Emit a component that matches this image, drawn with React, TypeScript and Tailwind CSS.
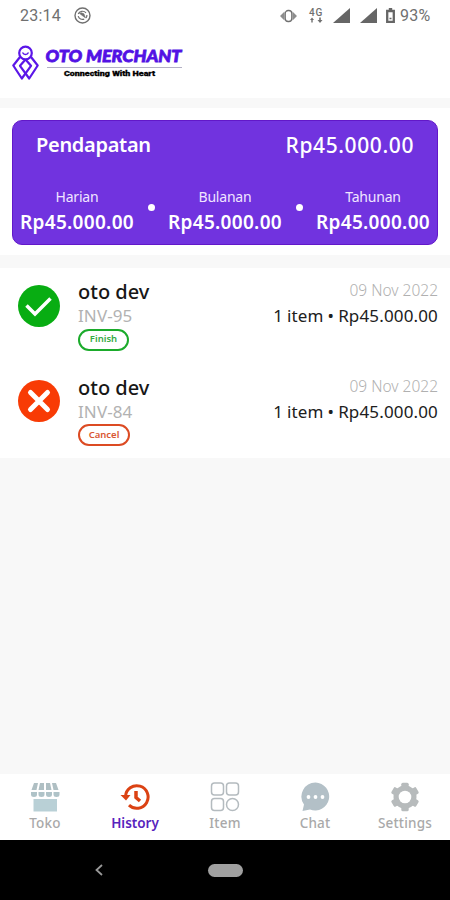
import React from 'react';
import { clsx } from 'clsx';

const stats = [
  { label: 'Harian', value: 'Rp45.000.00' },
  { label: 'Bulanan', value: 'Rp45.000.00' },
  { label: 'Tahunan', value: 'Rp45.000.00' },
];

const orders = [
  { name: 'oto dev', invoice: 'INV-95', status: 'Finish', date: '09 Nov 2022', total: '1 item • Rp45.000.00' },
  { name: 'oto dev', invoice: 'INV-84', status: 'Cancel', date: '09 Nov 2022', total: '1 item • Rp45.000.00' },
];

function StatusBar() {
  return (
    <div className="flex h-[31px] items-center justify-between pl-5 pr-[18px] font-[Roboto,sans-serif] text-[#707070]">
      <div className="flex items-center gap-[13px]">
        <span className="text-[16px] leading-none tracking-[0.2px]">23:14</span>
        <svg width="17" height="17" viewBox="0 0 17 17" fill="none" stroke="currentColor">
          <circle cx="8.5" cy="8.5" r="7.5" strokeWidth="1.4" />
          <path d="M4.2 7C5.4 3.9 9.8 3.3 12 5.8M4.2 9.2c.8 2.7 3.5 3.9 6 2.9M12.9 8c.1 1.200-.3 2.200-.9 3" strokeWidth="1.2" />
          <path d="M5.5 6.5l6 4.5-1.5-4.2-2.5-1z" fill="currentColor" strokeWidth=".5" />
        </svg>
      </div>
      <div className="flex items-center">
        <svg width="17" height="14" viewBox="0 0 17 14" fill="currentColor">
          <path d="M0 7l4.500-4.500v9zM17 7l-4.500-4.500v9z" opacity=".8" />
          <rect x="5.200" y="1.500" width="6.600" height="11" rx="3" fill="none" stroke="currentColor" strokeWidth="1.300" />
        </svg>
        <div className="ml-[11px] flex w-[15px] flex-col items-center">
          <span className="pl-px text-[10px] font-medium leading-[8px] tracking-[0.8px]">4G</span>
          <svg width="14" height="6" viewBox="0 0 14 6" fill="currentColor">
            <path d="M3 .5l2 2.500H3.700V5.500H2.300V3H1zM11 6L8.500 3h1.700V.5h1.600V3h1.700z" />
          </svg>
        </div>
        <svg className="ml-[10px]" width="17" height="15" viewBox="0 0 17 15" fill="#666">
          <path d="M17 0v15H0z" />
        </svg>
        <svg className="ml-[10px]" width="17" height="15" viewBox="0 0 17 15" fill="#666">
          <path d="M17 0v15H0z" />
        </svg>
        <svg className="ml-[9px]" width="9" height="15" viewBox="0 0 9 15" fill="none" stroke="#666">
          <path d="M1.2 3h6.6v10.8H1.2z" strokeWidth="2.3" />
          <path d="M2.8 1h3.4" strokeWidth="2" />
          <path d="M3.5 10.5h2" strokeWidth="1.5" />
        </svg>
        <span className="ml-[5px] w-[32px] text-[16px] leading-none tracking-[0.2px]">93%</span>
      </div>
    </div>
  );
}

function Logo() {
  return (
    <svg width="176" height="36" viewBox="0 0 176 36">
      <g fill="none" stroke="#5b16e8" strokeWidth="2.2" strokeLinejoin="round">
        <circle cx="13.5" cy="8" r="6.3" />
        <path d="M10.5 7.5c1.3 2.7 4.7 2.7 6 0" strokeWidth="1.5" />
        <path d="M8 12L1.3 20.5 9.8 33.5 19 20.8 13.5 14.5" />
        <path d="M19 12l6.7 8.5-8.5 13L8 20.8l5.5-6.3" />
      </g>
      <text
        x="33.5"
        y="16.5"
        textLength="136"
        lengthAdjust="spacingAndGlyphs"
        className="fill-[#5211e4] stroke-[#5211e4] font-[Lato,sans-serif] text-[17.5px] font-black italic"
        strokeWidth=".8"
      >
        OTO MERCHANT
      </text>
      <path d="M35 22.5h135" stroke="#b3b0c4" strokeWidth="1.2" />
      <text
        x="52"
        y="31"
        textLength="91"
        lengthAdjust="spacingAndGlyphs"
        className="fill-black stroke-black font-[Roboto,sans-serif] text-[8px] font-black"
        strokeWidth=".3"
      >
        Connecting With Heart
      </text>
    </svg>
  );
}

function IncomeCard() {
  return (
    <section className="h-[147px] bg-white px-3 pt-3">
      <div className="h-[125px] rounded-[10px] border border-[#6218c9] bg-[#7133df] text-white">
        <div className="flex justify-between pl-[23px] pr-[23px] pt-[9px] text-[20px] font-semibold leading-[30px]">
          <span className="tracking-[-0.3px]">Pendapatan</span>
          <span className="text-[21px] font-medium tracking-[0.6px]">Rp45.000.00</span>
        </div>
        <div className="mt-[26px] flex items-center justify-between px-[6px]">
          {stats.map((stat, i) => (
            <React.Fragment key={stat.label}>
              {i > 0 && <span className="mt-[-8px] size-[7px] rounded-full bg-white" />}
              <div className="flex w-[116px] flex-col items-center whitespace-nowrap">
                <span className="text-[14px] leading-[22px] tracking-[-0.2px] text-[#f0e5ff]">{stat.label}</span>
                <span className="text-[19px] font-semibold leading-[28px] tracking-[0.3px]">{stat.value}</span>
              </div>
            </React.Fragment>
          ))}
        </div>
      </div>
    </section>
  );
}

function OrderIcon({ done }: { done: boolean }) {
  return (
    <svg width="42" height="42" viewBox="0 0 42 42" fill="none" stroke="white">
      <circle cx="21" cy="21" r="21" stroke="none" className={done ? 'fill-[#08ad12]' : 'fill-[#f83b05]'} />
      {done ? (
        <path d="M8.5 20.500l8.500 8.500L32.500 13.500" strokeWidth="3.500" />
      ) : (
        <path d="M12.500 12.500l17 17M29.500 12.500l-17 17" strokeWidth="5" strokeLinecap="round" />
      )}
    </svg>
  );
}

function OrderRow({ order }: { order: (typeof orders)[number] }) {
  const done = order.status === 'Finish';
  return (
    <div className="flex h-[95.5px] pl-[18px] pr-3 pt-[11px]">
      <div className="pt-[5.5px]">
        <OrderIcon done={done} />
      </div>
      <div className="ml-[18px] flex flex-col items-start">
        <span className="text-[20px] font-medium leading-[26px] text-[#171717]">{order.name}</span>
        <span className="text-[17px] leading-[22px] tracking-[0.1px] text-[#b2b2b2]">{order.invoice}</span>
        <span
          className={clsx(
            'mt-[1.5px] flex h-[22px] items-center justify-center rounded-full border-2 text-[9.5px] font-semibold',
            done ? 'w-[51px] border-[#1bab2b] text-[#35aa43]' : 'w-[52px] border-[#dc4b23] text-[#d95733]'
          )}
        >
          {order.status}
        </span>
      </div>
      <div className="ml-auto flex flex-col items-end whitespace-nowrap">
        <span className="text-[15.5px] font-light leading-[22px] text-[#b0b0b0]">{order.date}</span>
        <span className="mt-[2px] text-[17px] leading-[26px] tracking-[0.15px] [word-spacing:-0.6px] text-[#202020]">
          {order.total}
        </span>
      </div>
    </div>
  );
}

function StoreIcon() {
  return (
    <svg width="30" height="30" viewBox="0 0 30 30">
      <path fill="#b9d0d6" d="M3.500 17h23.500v12.500H3.500z" />
      <path fill="#afbfc3" d="M4 1h4L6.500 8H1.500zM10 1h4v7H8.500zM16 1h4l1.500 7H16zM22 1h4l2.500 7h-5z" />
      <path fill="#afc3c8" d="M1 10h6v2.500a3 2.500 0 01-6 0zM8.500 10h6v2.500a3 2.500 0 01-6 0zM16 10h6v2.500a3 2.500 0 01-6 0zM23.500 10h6v2.500a3 2.500 0 01-6 0z" />
    </svg>
  );
}

function HistoryIcon() {
  return (
    <svg width="30" height="30" viewBox="0 0 30 30" fill="none" stroke="#db4213">
      <path d="M5.500 14.500A11.300 11.300 0 1 1 9 23.200" strokeWidth="3" />
      <path d="M.5 13h10l-4.500 5.500z" fill="#db4213" stroke="none" />
      <path d="M16 9v6.500l4 3.500" strokeWidth="3.500" />
    </svg>
  );
}

function ItemIcon() {
  return (
    <svg width="30" height="30" viewBox="0 0 30 30" fill="none" stroke="#b4bbbf" strokeWidth="1.5">
      <rect x="1.5" y="1" width="12" height="12" rx="3" />
      <rect x="16.5" y="1" width="12" height="12" rx="3" />
      <rect x="1.5" y="16.5" width="12" height="12" rx="3" />
      <circle cx="22.5" cy="22.5" r="6" />
    </svg>
  );
}

function ChatIcon() {
  return (
    <svg width="30" height="30" viewBox="0 0 30 30">
      <path fill="#b3c0c7" d="M15.500.5a14 14 0 1 1-5.500 27L2.500 29l1.500-6.500A14 14 0 0 1 15.500.5z" />
      <g fill="white">
        <circle cx="8.5" cy="15" r="1.9" />
        <circle cx="15.5" cy="15" r="1.9" />
        <circle cx="22.5" cy="15" r="1.9" />
      </g>
    </svg>
  );
}

function SettingsIcon() {
  return (
    <svg width="30" height="30" viewBox="0 0 30 30">
      <g fill="#b7bbbc">
        <circle cx="15" cy="15" r="11.5" />
        <rect x="11.3" y="0.7" width="7.4" height="28.6" rx="1.5" />
        <rect x="11.3" y="0.7" width="7.4" height="28.6" rx="1.5" transform="rotate(60 15 15)" />
        <rect x="11.3" y="0.7" width="7.4" height="28.6" rx="1.5" transform="rotate(120 15 15)" />
      </g>
      <circle cx="15" cy="15" r="6.3" fill="white" />
    </svg>
  );
}

const tabs = [
  { label: 'Toko', icon: StoreIcon },
  { label: 'History', icon: HistoryIcon },
  { label: 'Item', icon: ItemIcon },
  { label: 'Chat', icon: ChatIcon },
  { label: 'Settings', icon: SettingsIcon },
];

export default function App() {
  const [active, setActive] = React.useState('History');

  return (
    <div className="flex h-[900px] w-[450px] flex-col bg-[#f8f8f8] font-['Noto_Sans',sans-serif]">
      <header className="h-[98px] bg-white">
        <StatusBar />
        <div className="pl-3 pt-[14px]">
          <Logo />
        </div>
      </header>

      <main className="flex flex-1 flex-col gap-[13px] pt-[10px]">
        <IncomeCard />
        <section className="h-[190px] bg-white">
          {orders.map((order) => (
            <OrderRow key={order.invoice} order={order} />
          ))}
        </section>
      </main>

      {/* Bottom tabs */}
      <nav className="grid h-[66px] grid-cols-5 bg-white">
        {tabs.map(({ label, icon: Icon }) => (
          <button key={label} onClick={() => setActive(label)} className="flex flex-col items-center pt-[8px]">
            <Icon />
            <span
              className={clsx(
                'mt-[1px] text-[13.5px] leading-[20px]',
                active === label ? 'font-semibold text-[#5724bd]' : 'font-medium tracking-[0.2px] text-[#a9a9a9]'
              )}
            >
              {label}
            </span>
          </button>
        ))}
      </nav>

      {/* Android navigation */}
      <div className="grid h-[60px] grid-cols-[198px_54px_198px] items-center justify-items-center bg-black">
        <svg width="8" height="12" viewBox="0 0 8 12" fill="none" stroke="#999" strokeWidth="1.8">
          <path d="M7 1L1.5 6 7 11" />
        </svg>
        <span className="h-[13px] w-[35px] rounded-full bg-[#a0a0a0]" />
      </div>
    </div>
  );
}
